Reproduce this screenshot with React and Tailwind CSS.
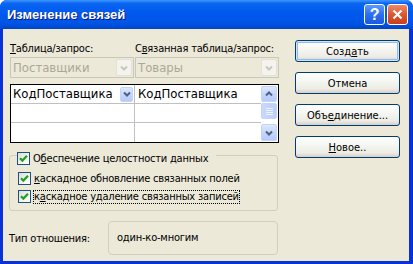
import React from 'react';

const font = "font-['Tahoma','DejaVu_Sans_Condensed','Liberation_Sans',sans-serif]";

function Check() {
  return (
    <span className="w-[13px] h-[13px] shrink-0 border border-[#1c5180] bg-[linear-gradient(135deg,#dcdcd7_0%,#f4f4f0_60%,#ffffff_100%)] flex items-center justify-center">
      <svg width="9" height="9" viewBox="0 0 9 9">
        <path d="M1 4.2 L3.4 6.6 L8 1.8" fill="none" stroke="#21a121" strokeWidth="2.2" />
      </svg>
    </span>
  );
}

function XpArrow({ up, className = '' }) {
  return (
    <span className={`flex items-center justify-center rounded-[2px] border border-[#c3d3fd] bg-[linear-gradient(180deg,#dde8fd_0%,#c6d6fc_50%,#b6cafa_100%)] ${className}`}>
      <svg width="8" height="6" viewBox="0 0 8 6">
        <path d={up ? 'M1 4.5 L4 1.5 L7 4.5' : 'M1 1.5 L4 4.5 L7 1.5'} fill="none" stroke="#4d6185" strokeWidth="2" />
      </svg>
    </span>
  );
}

function DisabledCombo({ text, className }) {
  return (
    <div className={`h-[21px] border border-[#c9c7ba] bg-[#ece9d8] flex items-center ${className}`}>
      <span className="flex-1 pl-[2px] text-[13px] tracking-normal text-[#aca899] leading-none">{text}</span>
      <span className="w-[16px] h-[17px] mr-[1px] border border-[#e3e1d6] bg-[#f4f3ee] rounded-[2px] flex items-center justify-center">
        <svg width="8" height="6" viewBox="0 0 8 6">
          <path d="M1 1.5 L4 4.5 L7 1.5" fill="none" stroke="#c9c7ba" strokeWidth="2" />
        </svg>
      </span>
    </div>
  );
}

function Button({ children, primary }) {
  return (
    <button
      className={`h-[22px] w-[105px] rounded-[3px] border border-[#003c74] bg-[linear-gradient(180deg,#ffffff_0%,#f6f6f2_40%,#ecebe4_80%,#d6d0c5_100%)] text-[11px] tracking-normal text-black leading-none ${
        primary ? 'shadow-[inset_0_0_0_1px_#cee7ff,inset_0_0_0_2px_#98b8ea]' : ''
      }`}
    >
      {children}
    </button>
  );
}

export default function App() {
  return (
    <div className={`w-[413px] h-[264px] flex flex-col bg-[#0831d9] rounded-t-[7px] overflow-hidden text-[11px] tracking-[-0.2px] text-black ${font}`}>
      {/* title bar */}
      <div className="h-[29px] shrink-0 flex items-center pl-[7px] pr-[5px] bg-[linear-gradient(180deg,#3d95ff_0%,#0a66f0_12%,#0058ee_45%,#0055e6_80%,#0044c8_100%)]">
        <span className="flex-1 text-white font-bold text-[13px] tracking-normal font-['Liberation_Sans',Arial,sans-serif] [text-shadow:1px_1px_0_#0a1883] pt-[1px]">
          Изменение связей
        </span>
        <span className="w-[21px] h-[21px] rounded-[3px] border border-white bg-[linear-gradient(180deg,#5b9bff_0%,#2b6ff0_50%,#1b58e0_100%)] flex items-center justify-center text-white font-bold text-[16px] leading-none font-['Liberation_Sans',Arial,sans-serif]">
          ?
        </span>
        <span className="ml-[2px] w-[21px] h-[21px] rounded-[3px] border border-white bg-[linear-gradient(180deg,#f08a68_0%,#e0552e_50%,#c8401c_100%)] flex items-center justify-center">
          <svg width="11" height="11" viewBox="0 0 11 11">
            <path d="M1.5 1.5 L9.5 9.5 M9.5 1.5 L1.5 9.5" stroke="white" strokeWidth="2.2" />
          </svg>
        </span>
      </div>

      {/* body */}
      <div className="flex-1 ml-[3px] mr-[4px] mb-[3px] bg-[#ece9d8] flex">
        <div className="w-[269px] ml-[7px] pt-[12px] flex flex-col">
          <div className="h-[16px] flex items-start leading-[15px] whitespace-nowrap">
            <span className="w-[125px] shrink-0">
              <span className="underline">Т</span>аблица/запрос:
            </span>
            <span className="shrink-0">
              С<span className="underline">в</span>язанная таблица/запрос:
            </span>
          </div>
          <div className="flex gap-[1px]">
            <DisabledCombo text="Поставщики" className="w-[124px]" />
            <DisabledCombo text="Товары" className="w-[144px]" />
          </div>

          {/* join grid */}
          <div className="mt-[6px] h-[59px] border border-black bg-white flex">
            <div className="flex-1 flex flex-col text-[13px] tracking-normal">
              {[0, 1, 2].map((i) => (
                <div key={i} className={`h-[19px] flex ${i < 2 ? 'border-b border-[#c0c0c0]' : ''}`}>
                  <div className="w-[124px] border-r border-[#c0c0c0] flex items-center">
                    {i === 0 && (
                      <>
                        <span className="flex-1 pl-[2px]">КодПоставщика</span>
                        <XpArrow className="w-[13px] h-[15px] mr-[1px]" />
                      </>
                    )}
                  </div>
                  <div className="flex-1 flex items-center pl-[3px]">{i === 0 && 'КодПоставщика'}</div>
                </div>
              ))}
            </div>
            <div className="w-[16px] mr-[1px] pt-[1px] pb-[1px] flex flex-col">
              <XpArrow up className="h-[16px]" />
              <span className="mt-[1px] h-[16px] rounded-[2px] border border-[#c3d3fd] bg-[linear-gradient(90deg,#c9d8fc_0%,#bccefb_100%)] flex flex-col items-center justify-center gap-[1px]">
                <span className="w-[7px] h-[1px] bg-[#eef4fe]" />
                <span className="w-[7px] h-[1px] bg-[#eef4fe]" />
                <span className="w-[7px] h-[1px] bg-[#eef4fe]" />
                <span className="w-[7px] h-[1px] bg-[#eef4fe]" />
              </span>
              <span className="flex-1" />
              <XpArrow className="h-[17px]" />
            </div>
          </div>

          {/* integrity group */}
          <div className="relative mt-[12px] -ml-[1px] w-[269px] h-[56px] rounded-[3px] border border-[#d0d0bf] pt-[16px] pl-[8px] flex flex-col gap-[5px]">
            <div className="absolute -top-[4px] left-[7px] bg-[#ece9d8] flex items-center gap-[3px] pr-[8px] h-[13px]">
              <Check />
              <span className="leading-none">
                О<span className="underline">б</span>еспечение целостности данных
              </span>
            </div>
            <div className="flex items-center gap-[3px] h-[13px]">
              <Check />
              <span className="leading-none">
                <span className="underline">к</span>аскадное обновление связанных полей
              </span>
            </div>
            <div className="flex items-center gap-[2px] h-[13px]">
              <Check />
              <span className="leading-[12px] border border-dotted border-black">
                к<span className="underline">а</span>скадное удаление связанных записей
              </span>
            </div>
          </div>

          {/* relationship type */}
          <div className="mt-[10px] flex items-center -ml-[1px]">
            <span className="w-[99px] pt-[2px]">Тип отношения:</span>
            <div className="w-[170px] h-[34px] rounded-[4px] border border-[#d0d0bf] flex items-center pl-[8px]">
              один-ко-многим
            </div>
          </div>
        </div>

        {/* buttons */}
        <div className="ml-[16px] pt-[11px] flex flex-col gap-[10px]">
          <Button primary>
            Созд<span className="underline">а</span>ть
          </Button>
          <Button>Отмена</Button>
          <Button>
            Объ<span className="underline">е</span>динение...
          </Button>
          <Button>
            <span className="underline">Н</span>овое..
          </Button>
        </div>
      </div>
    </div>
  );
}
